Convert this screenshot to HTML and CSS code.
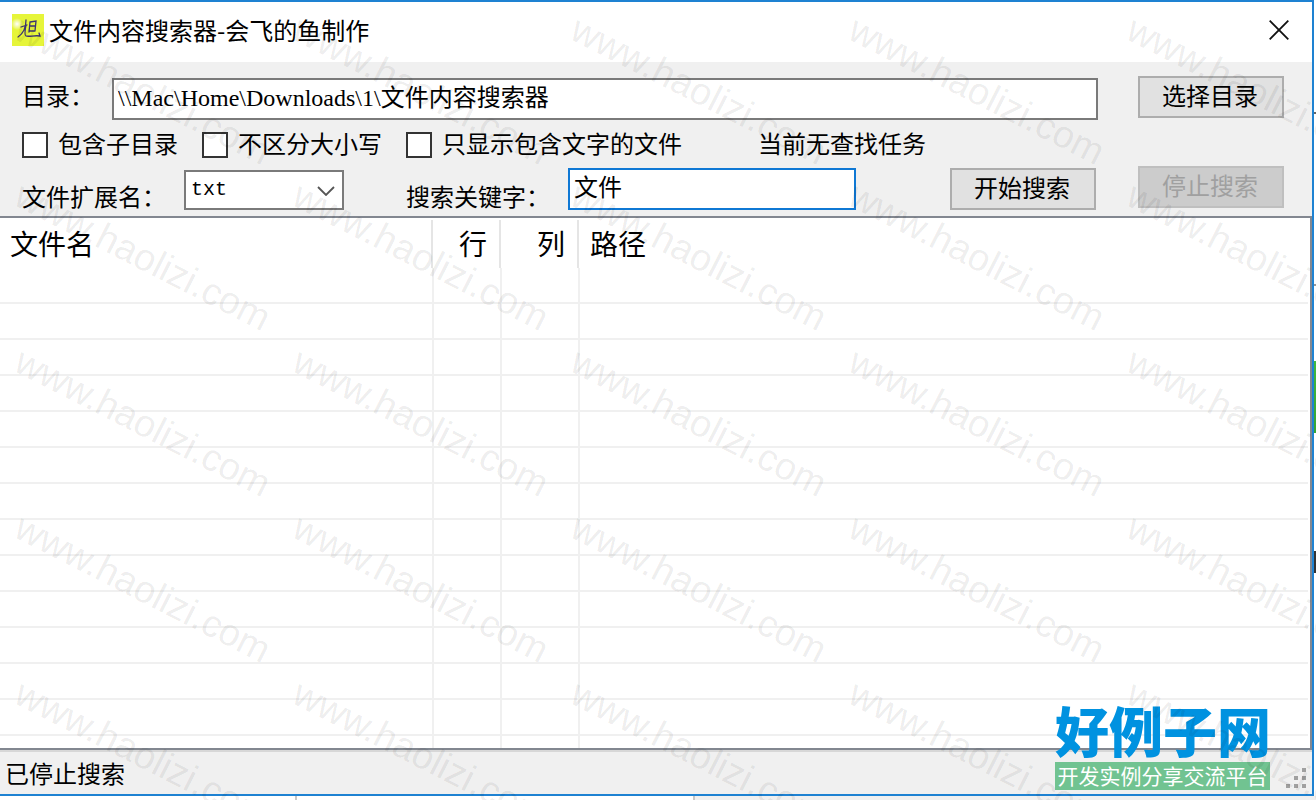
FILE: index.html
```html
<!DOCTYPE html>
<html lang="zh-CN">
<head>
  <meta charset="UTF-8" />
  <meta name="viewport" content="width=device-width, initial-scale=1.0" />
  <title>文件内容搜索器</title>
  <link rel="stylesheet" href="styles.css">
</head>
<body>
  <div class="window">
    <!-- Title bar -->
    <header class="title-bar">
      <svg class="app-icon" viewBox="0 0 32 32" aria-hidden="true">
        <defs>
          <radialGradient id="glow"><stop offset="0" stop-color="#fff" /><stop offset="1" stop-color="#fff" stop-opacity="0" /></radialGradient>
        </defs>
        <rect width="32" height="32" fill="#e6f53a" />
        <circle cx="5" cy="10" r="6" fill="url(#glow)" />
        <path d="M9 13l6-2M14 6c0 8-2 13-8 17M14 11c-1 5-2 10 0 11 3 1 9-1 14 0l-1-3M18 8l-1 10M18 8l6-1-1 10M18 12h5M17 17h6" fill="none" stroke="#3b3272" stroke-width="1.3" stroke-linecap="round" />
      </svg>
      <span class="title">文件内容搜索器-会飞的鱼制作</span>
      <button class="close-btn" aria-label="关闭">
        <svg viewBox="0 0 20 20"><path d="M.7.7l18.6 18.6M19.3.7L.7 19.3" fill="none" stroke="#111" stroke-width="1.8" /></svg>
      </button>
    </header>

    <!-- Search options -->
    <form class="panel">
      <div class="row">
        <label class="dir-label" for="dir">目录：</label>
        <input class="text-box dir-box" type="text" id="dir" value="\\Mac\Home\Downloads\1\文件内容搜索器">
        <button class="btn" type="button">选择目录</button>
      </div>
      <div class="checks">
        <label class="check"><input type="checkbox"><span>包含子目录</span></label>
        <label class="check"><input type="checkbox"><span>不区分大小写</span></label>
        <label class="check"><input type="checkbox"><span>只显示包含文字的文件</span></label>
        <span class="task">当前无查找任务</span>
      </div>
      <div class="row">
        <label class="field-label" for="ext">文件扩展名：</label>
        <div class="select-wrap">
          <select id="ext"><option>txt</option></select>
          <svg class="arrow" viewBox="0 0 18 10" aria-hidden="true"><path d="M1 1l8 8 8-8" fill="none" stroke="#555" stroke-width="1.8" /></svg>
        </div>
        <label class="field-label" for="keyword">搜索关键字：</label>
        <input class="text-box keyword-box" type="text" id="keyword" value="文件">
        <button class="btn start-btn" type="button">开始搜索</button>
        <button class="btn stop-btn" type="button" disabled>停止搜索</button>
      </div>
    </form>

    <!-- Results -->
    <div class="results">
      <table>
        <colgroup><col class="c-name"><col class="c-line"><col class="c-col"><col></colgroup>
        <thead>
          <tr><th>文件名</th><th class="num">行</th><th class="num">列</th><th>路径</th></tr>
        </thead>
        <tbody>
          <tr><td></td><td></td><td></td><td></td></tr>
          <tr><td></td><td></td><td></td><td></td></tr>
          <tr><td></td><td></td><td></td><td></td></tr>
          <tr><td></td><td></td><td></td><td></td></tr>
          <tr><td></td><td></td><td></td><td></td></tr>
          <tr><td></td><td></td><td></td><td></td></tr>
          <tr><td></td><td></td><td></td><td></td></tr>
          <tr><td></td><td></td><td></td><td></td></tr>
          <tr><td></td><td></td><td></td><td></td></tr>
          <tr><td></td><td></td><td></td><td></td></tr>
          <tr><td></td><td></td><td></td><td></td></tr>
          <tr><td></td><td></td><td></td><td></td></tr>
          <tr><td></td><td></td><td></td><td></td></tr>
          <tr><td></td><td></td><td></td><td></td></tr>
        </tbody>
      </table>
    </div>

    <footer class="status-bar">
      <span>已停止搜索</span>
      <svg class="grip" viewBox="0 0 20 20" aria-hidden="true"><path d="M16 0h4v4h-4zM8 8h4v4H8zM16 8h4v4h-4zM0 16h4v4H0zM8 16h4v4H8zM16 16h4v4h-4z" fill="#a0a0a0" /></svg>
    </footer>
  </div>

  <!-- Slivers of the windows behind -->
  <div class="behind-right"></div>
  <div class="behind-bottom"></div>

  <div class="site-logo">
    <div class="site-name">好例子网</div>
    <div class="site-slogan">开发实例分享交流平台</div>
  </div>

  <div class="watermark" aria-hidden="true">
    <span>www.haolizi.com</span><span>www.haolizi.com</span><span>www.haolizi.com</span><span>www.haolizi.com</span><span>www.haolizi.com</span>
    <span>www.haolizi.com</span><span>www.haolizi.com</span><span>www.haolizi.com</span><span>www.haolizi.com</span><span>www.haolizi.com</span>
    <span>www.haolizi.com</span><span>www.haolizi.com</span><span>www.haolizi.com</span><span>www.haolizi.com</span><span>www.haolizi.com</span>
    <span>www.haolizi.com</span><span>www.haolizi.com</span><span>www.haolizi.com</span><span>www.haolizi.com</span><span>www.haolizi.com</span>
    <span>www.haolizi.com</span><span>www.haolizi.com</span><span>www.haolizi.com</span><span>www.haolizi.com</span><span>www.haolizi.com</span>
  </div>
</body>
</html>
```
FILE: styles.css
```css
* {
  box-sizing: border-box;
}
body {
  margin: 0;
  height: 100vh;
  display: grid;
  grid-template-columns: 1fr 2px;
  grid-template-rows: 1fr 4px;
  position: relative;
  overflow: hidden;
  background: #fff;
  color: #000;
  font-family: "Noto Sans CJK SC", sans-serif;
  font-size: 24px;
  line-height: 24px;
}
button, input, select {
  font: inherit;
  color: inherit;
  margin: 0;
}
.window {
  display: flex;
  flex-direction: column;
  min-height: 0;
  border: 2px solid #1e82d2;
  border-left: none;
  background: #f0f0f0;
}
/* Title bar */
.title-bar {
  display: flex;
  align-items: center;
  height: 60px;
  padding: 0 23px 4px 12px;
  background: #fff;
}
.app-icon {
  width: 32px;
  height: 32px;
  margin-right: 5px;
}
.close-btn {
  display: flex;
  margin-left: auto;
  padding: 0;
  border: none;
  background: none;
}
.close-btn svg {
  width: 20px;
  height: 20px;
}
/* Search options */
.panel {
  padding: 14px 28px 6px 22px;
}
.row {
  display: flex;
  align-items: flex-end;
  height: 44px;
}
.dir-label {
  width: 90px;
  padding-bottom: 6px;
  align-self: center;
}
.field-label {
  width: 162px;
  padding-bottom: 2px;
}
.text-box {
  height: 42px;
  min-width: 0;
  padding: 0 4px 8px;
  border: 2px solid #7a7a7a;
  background: #fff;
  font-family: "Liberation Serif", "Noto Sans CJK SC", serif;
  outline: none;
}
.dir-box {
  flex: 1;
  margin-right: 40px;
}
.keyword-box {
  width: 288px;
  border-color: #0f78d4;
}
.btn {
  width: 146px;
  height: 42px;
  padding: 0 2px 4px 0;
  border: 2px solid #adadad;
  background: #e1e1e1;
  line-height: 24px;
}
.row .btn:last-child {
  align-self: flex-start;
}
.start-btn {
  margin-left: auto;
  margin-right: 42px;
}
.stop-btn {
  border-color: #bfbfbf;
  background: #ccc;
  color: #a0a0a0;
}
.checks {
  display: flex;
  align-items: center;
  gap: 24px;
  height: 26px;
  margin: 12px 0 8px;
}
.check {
  display: flex;
  align-items: center;
  gap: 10px;
}
.check span, .task {
  padding-bottom: 4px;
}
.check input {
  appearance: none;
  width: 26px;
  height: 26px;
  border: 2px solid #333;
  background: #fff;
}
.task {
  margin-left: 52px;
}
.select-wrap {
  position: relative;
  width: 160px;
  height: 40px;
  margin-right: 62px;
}
.select-wrap select {
  appearance: none;
  width: 100%;
  height: 100%;
  padding: 0 5px;
  border: 2px solid #7a7a7a;
  border-radius: 0;
  background: #fff;
  font-family: "Liberation Mono", monospace;
  font-size: 20px;
}
.arrow {
  position: absolute;
  right: 9px;
  top: 16px;
  width: 18px;
  height: 10px;
}
/* Results */
.results {
  flex: 1;
  min-height: 0;
  overflow: hidden;
  padding-right: 2px;
  border: 2px solid #828790;
  border-left: none;
  background: #fff;
}
table {
  width: 100%;
  table-layout: fixed;
  border-collapse: separate;
  border-spacing: 0;
}
.c-name {
  width: 434px;
}
.c-line {
  width: 68px;
}
.c-col {
  width: 78px;
}
th {
  height: 50px;
  padding: 0 10px;
  font-size: 28px;
  font-weight: normal;
  line-height: 28px;
  text-align: left;
  background: linear-gradient(#e5e5e5, #e5e5e5) right 1px top 2px / 2px 100% no-repeat;
}
th.num {
  text-align: right;
  padding-right: 15px;
}
th:last-child {
  background: none;
}
td {
  height: 36px;
  padding: 0;
  border-right: 2px solid #f0f0f0;
  border-bottom: 2px solid #f0f0f0;
}
td:last-child {
  border-right: none;
}
.status-bar {
  display: flex;
  align-items: center;
  justify-content: space-between;
  height: 44px;
  padding: 0 6px 0 5px;
  border-top: 2px solid #d7d7d7;
}
.grip {
  width: 20px;
  height: 20px;
  align-self: flex-end;
  margin-bottom: 6px;
}
/* Windows behind */
.behind-right {
  background:
    linear-gradient(#3fb83f, #35a535) 0 361px / 2px 72px no-repeat,
    linear-gradient(#333, #333) 0 551px / 2px 22px no-repeat,
    linear-gradient(#999, #999) 0 284px / 2px 2px no-repeat,
    linear-gradient(#666, #666) 0 112px / 2px 2px no-repeat,
    #fff;
}
.behind-bottom {
  grid-column: 1 / 3;
  background:
    linear-gradient(#c8c8c8, #c8c8c8) 295px 0 / 2px 4px no-repeat,
    linear-gradient(90deg, #fff 693px, #c8c8c8 693px, #c8c8c8 695px, #f0f0f0 695px);
}
/* Site logo over the corner */
.site-logo {
  position: absolute;
  right: 46px;
  bottom: 10px;
  width: 215px;
  text-align: center;
  white-space: nowrap;
}
.site-name {
  padding-bottom: 4px;
  color: #0092e0;
  font-size: 54px;
  font-weight: 900;
  line-height: 56px;
}
.site-slogan {
  height: 28px;
  background: #71c391;
  color: #fff;
  font-size: 21px;
  line-height: 26px;
}
/* Tiled watermark */
.watermark {
  position: absolute;
  inset: 0;
  display: grid;
  grid-template-columns: repeat(5, 278px);
  grid-auto-rows: 166px;
  padding: 6px 0 0 12px;
  overflow: hidden;
  pointer-events: none;
  color: rgba(0, 0, 0, 0.08);
  font-family: "Liberation Sans", sans-serif;
  font-size: 38px;
  line-height: 38px;
}
.watermark span {
  justify-self: start;
  align-self: start;
  transform: rotate(27deg);
  transform-origin: 0 32px;
}
```
